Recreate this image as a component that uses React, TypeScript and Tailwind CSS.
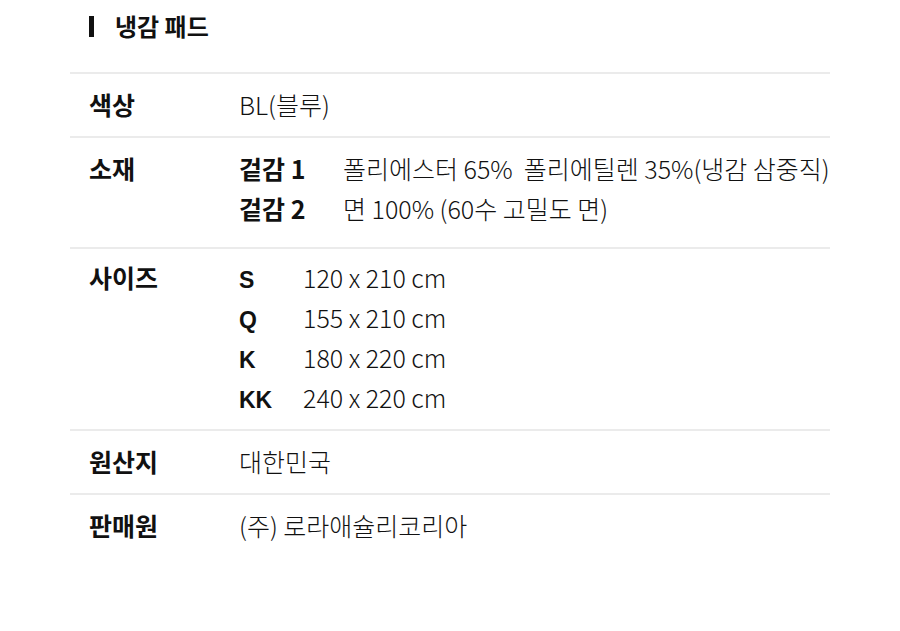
export default function App() {
  const materials = [
    { label: "겉감 1", value: "폴리에스터 65%  폴리에틸렌 35%(냉감 삼중직)" },
    { label: "겉감 2", value: "면 100% (60수 고밀도 면)" },
  ];
  const sizes = [
    { label: "S", value: "120 x 210 cm" },
    { label: "Q", value: "155 x 210 cm" },
    { label: "K", value: "180 x 220 cm" },
    { label: "KK", value: "240 x 220 cm" },
  ];

  return (
    <div
      className="min-h-[631px] bg-white text-[#111] px-[70px]"
      style={{ fontFamily: '"Noto Sans CJK KR", "Noto Sans", sans-serif' }}
    >
      {/* title */}
      <div className="flex items-center h-[52px] pl-[19px]">
        <span className="w-[5px] h-[21px] bg-[#111] mr-[21px]" />
        <h2 className="text-[24px] font-bold leading-none">냉감 패드</h2>
      </div>

      <div className="mt-[20px] text-[25px] leading-[40px]">
        <div className="flex border-t-2 border-[#ebebeb] pl-[19px] pt-[10px] pb-[12px]">
          <div className="w-[150px] font-bold">색상</div>
          <div className="font-light">BL(블루)</div>
        </div>

        <div className="flex border-t-2 border-[#ebebeb] pl-[19px] pt-[10px] pb-[19px]">
          <div className="w-[150px] font-bold">소재</div>
          <div>
            {materials.map((m) => (
              <div key={m.label} className="flex">
                <div className="w-[104px] font-bold">{m.label}</div>
                <div className="font-light whitespace-pre">{m.value}</div>
              </div>
            ))}
          </div>
        </div>

        <div className="flex border-t-2 border-[#ebebeb] pl-[19px] pt-[8px] pb-[12px]">
          <div className="w-[150px] font-bold">사이즈</div>
          <div>
            {sizes.map((s) => (
              <div key={s.label} className="flex h-[40px]">
                <div
                  className="w-[64px] font-bold text-[23px] leading-[40px] pt-[3px]"
                  style={{ fontFamily: '"Liberation Sans", Arial, sans-serif' }}
                >
                  {s.label}
                </div>
                <div className="font-light">{s.value}</div>
              </div>
            ))}
          </div>
        </div>

        <div className="flex border-t-2 border-[#ebebeb] pl-[19px] pt-[10px] pb-[12px]">
          <div className="w-[150px] font-bold">원산지</div>
          <div className="font-light">대한민국</div>
        </div>

        <div className="flex border-t-2 border-[#ebebeb] pl-[19px] pt-[10px] pb-[12px]">
          <div className="w-[150px] font-bold">판매원</div>
          <div className="font-light">(주) 로라애슐리코리아</div>
        </div>
      </div>
    </div>
  );
}
